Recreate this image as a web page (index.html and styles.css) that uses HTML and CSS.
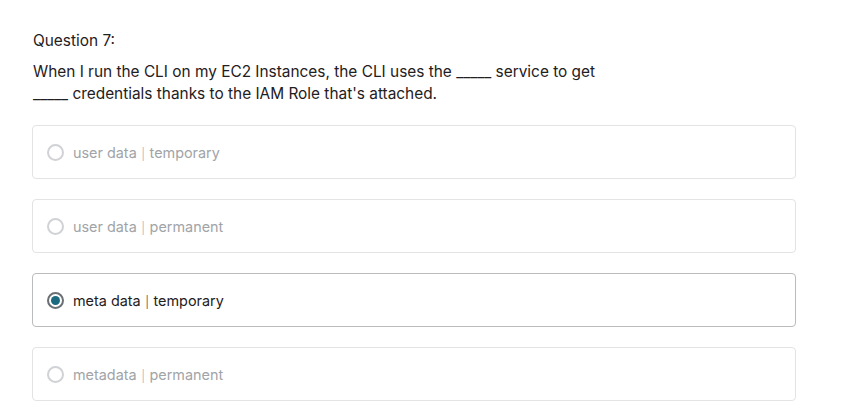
FILE: index.html
```html
<!DOCTYPE html>
<html>
<head>
<meta charset="utf-8">
<link rel="stylesheet" href="styles.css">
</head>
<body>
<div class="quiz">
  <div class="q-title">Question 7:</div>
  <p class="q-text">When I run the CLI on my EC2 Instances, the CLI uses the _____ service to get _____ credentials thanks to the IAM Role that's attached.</p>
  <div class="options">
    <label class="option">
      <span class="radio"></span>
      <span class="label">user data <span class="pipe">|</span> temporary</span>
    </label>
    <label class="option">
      <span class="radio"></span>
      <span class="label">user data <span class="pipe">|</span> permanent</span>
    </label>
    <label class="option selected">
      <span class="radio"><span class="dot"></span></span>
      <span class="label">meta data <span class="pipe">|</span> temporary</span>
    </label>
    <label class="option">
      <span class="radio"></span>
      <span class="label">metadata <span class="pipe">|</span> permanent</span>
    </label>
  </div>
</div>
</body>
</html>
```
FILE: styles.css
```css
html, body {
  margin: 0;
  padding: 0;
  background: #ffffff;
}
body {
  font-family: Inter, "Liberation Sans", sans-serif;
  color: #1f2022;
}
.quiz {
  padding: 30px 50px 0 32px;
}
.q-title {
  font-size: 15.4px;
  line-height: 22px;
  margin: 0 0 9px 1px;
}
.q-text {
  font-size: 15.4px;
  line-height: 22px;
  margin: 0 0 20px 1px;
  max-width: 600px;
}
.options {
  display: flex;
  flex-direction: column;
  gap: 20px;
}
.option {
  display: flex;
  align-items: center;
  height: 54px;
  box-sizing: border-box;
  border: 1px solid #e3e3e3;
  border-radius: 4px;
  padding-left: 14px;
  gap: 9px;
}
.option.selected {
  border-color: #b9bbbd;
}
.radio {
  width: 17px;
  height: 17px;
  box-sizing: border-box;
  border: 2px solid #d0d2d5;
  border-radius: 50%;
  display: flex;
  align-items: center;
  justify-content: center;
}
.option.selected .radio {
  border: 2px solid #6a6f73;
}
.dot {
  width: 9px;
  height: 9px;
  border-radius: 50%;
  background: #1c6a80;
}
.label {
  font-size: 14.4px;
  color: #a1a4a7;
}
.pipe {
  font-family: "Open Sans", sans-serif;
  font-weight: 300;
  margin: 0 -1.5px;
}
.option.selected .label {
  color: #1f2022;
}
```
